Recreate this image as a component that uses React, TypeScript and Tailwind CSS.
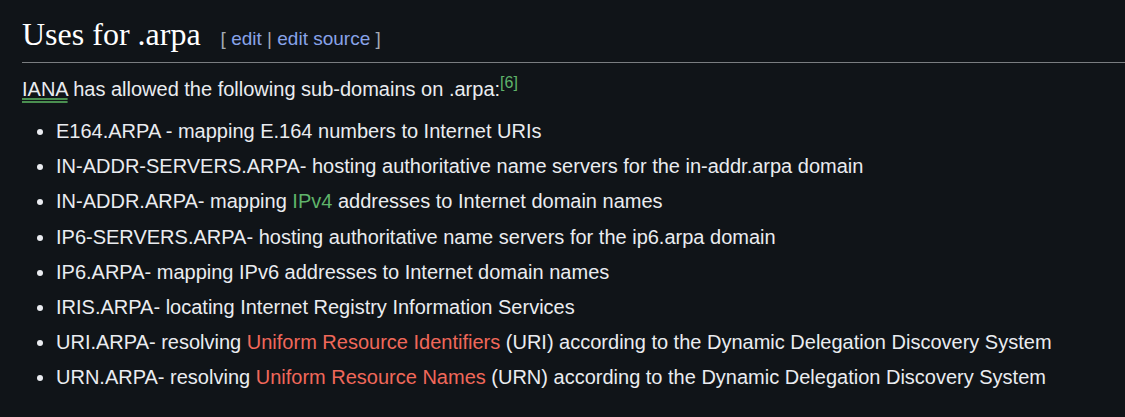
export default function App() {
  const items: React.ReactNode[] = [
    <>E164.ARPA - mapping E.164 numbers to Internet URIs</>,
    <>IN-ADDR-SERVERS.ARPA- hosting authoritative name servers for the in-addr.arpa domain</>,
    <>IN-ADDR.ARPA- mapping <span className="text-[#5fb36a]">IPv4</span> addresses to Internet domain names</>,
    <>IP6-SERVERS.ARPA- hosting authoritative name servers for the ip6.arpa domain</>,
    <>IP6.ARPA- mapping IPv6 addresses to Internet domain names</>,
    <>IRIS.ARPA- locating Internet Registry Information Services</>,
    <>URI.ARPA- resolving <span className="text-[#f0685a]">Uniform Resource Identifiers</span> (URI) according to the Dynamic Delegation Discovery System</>,
    <>URN.ARPA- resolving <span className="text-[#f0685a]">Uniform Resource Names</span> (URN) according to the Dynamic Delegation Discovery System</>,
  ];
  return (
    <div className="h-[417px] w-[1125px] bg-[#101418] pl-[22px] pt-[14px] text-[#eaecf0] font-[Liberation_Sans,Arial,sans-serif]">
      <div className="flex items-baseline border-b border-[#7a7d80] pb-[8px]">
        <h2 className="font-[Liberation_Serif,serif] text-[32px] leading-[40px] text-white">Uses for .arpa</h2>
        <span className="ml-[20px] text-[19px] text-[#a2a9b1]">
          [ <span className="text-[#88a3e8]">edit</span> | <span className="text-[#88a3e8]">edit source</span> ]
        </span>
      </div>
      <p className="mt-[10px] text-[20px] leading-[32px]">
        <span className="underline decoration-double decoration-[#4a8f50] underline-offset-2">IANA</span> has allowed the following sub-domains on .arpa:
        <sup className="text-[16px] text-[#5fb36a]">[6]</sup>
      </p>
      <ul className="mt-[9px] ml-[34px] list-disc text-[20px] leading-[35.2px]">
        {items.map((it, i) => (
          <li key={i}>{it}</li>
        ))}
      </ul>
    </div>
  );
}
